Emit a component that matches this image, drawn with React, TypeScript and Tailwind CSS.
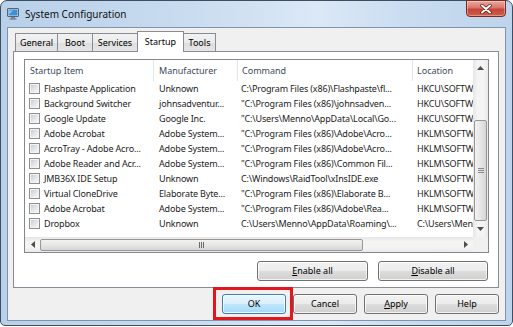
import React from 'react';

type Row = [string, string, string, string];

const rows: Row[] = [
  ['Flashpaste Application', 'Unknown', 'C:\\Program Files (x86)\\Flashpaste\\fl...', 'HKCU\\SOFTWARE\\Microsoft\\Windows\\Run'],
  ['Background Switcher', 'johnsadventur...', '"C:\\Program Files (x86)\\johnsadven...', 'HKCU\\SOFTWARE\\Microsoft\\Windows\\Run'],
  ['Google Update', 'Google Inc.', '"C:\\Users\\Menno\\AppData\\Local\\Go...', 'HKCU\\SOFTWARE\\Microsoft\\Windows\\Run'],
  ['Adobe Acrobat', 'Adobe System...', '"C:\\Program Files (x86)\\Adobe\\Acro...', 'HKLM\\SOFTWARE\\Microsoft\\Windows\\Run'],
  ['AcroTray - Adobe Acro...', 'Adobe System...', '"C:\\Program Files (x86)\\Adobe\\Acro...', 'HKLM\\SOFTWARE\\Microsoft\\Windows\\Run'],
  ['Adobe Reader and Acr...', 'Adobe System...', '"C:\\Program Files (x86)\\Common Fil...', 'HKLM\\SOFTWARE\\Microsoft\\Windows\\Run'],
  ['JMB36X IDE Setup', 'Unknown', 'C:\\Windows\\RaidTool\\xInsIDE.exe', 'HKLM\\SOFTWARE\\Microsoft\\Windows\\Run'],
  ['Virtual CloneDrive', 'Elaborate Byte...', '"C:\\Program Files (x86)\\Elaborate B...', 'HKLM\\SOFTWARE\\Microsoft\\Windows\\Run'],
  ['Adobe Acrobat', 'Adobe System...', '"C:\\Program Files (x86)\\Adobe\\Rea...', 'HKLM\\SOFTWARE\\Microsoft\\Windows\\Run'],
  ['Dropbox', 'Unknown', 'C:\\Users\\Menno\\AppData\\Roaming\\...', 'C:\\Users\\Menno\\AppData\\Roaming'],
];

const tabs = ['General', 'Boot', 'Services', 'Startup', 'Tools'];
const tabWidths = ['w-[43px]', 'w-[36px]', 'w-[46px]', 'w-[47px]', 'w-[33px]'];

const Button: React.FC<{ width: string; isDefault?: boolean; children: React.ReactNode }> = ({
  width,
  isDefault,
  children,
}) => (
  <div
    className={`${width} h-[20px] flex items-center justify-center rounded-[3px] border text-[9px] text-black shadow-[inset_0_0_0_1px_rgba(255,255,255,0.75)] ${
      isDefault
        ? 'border-[#3c7fb1] bg-[linear-gradient(#eaf6fd_0%,#d9f0fc_50%,#bee6fd_51%,#a7d9f5_100%)]'
        : 'border-[#707070] bg-[linear-gradient(#f2f2f2_0%,#ebebeb_50%,#dddddd_51%,#cfcfcf_100%)]'
    }`}
  >
    {children}
  </div>
);

const Arrow: React.FC<{ dir: 'up' | 'down' | 'left' | 'right' }> = ({ dir }) => {
  const pts = {
    up: '0,4 3.5,0 7,4',
    down: '0,0 3.5,4 7,0',
    left: '4,0 0,3.5 4,7',
    right: '0,0 4,3.5 0,7',
  }[dir];
  const vertical = dir === 'up' || dir === 'down';
  return (
    <svg width={vertical ? 7 : 4} height={vertical ? 4 : 7} viewBox={vertical ? '0 0 7 4' : '0 0 4 7'}>
      <polygon points={pts} fill="#4d4d4d" />
    </svg>
  );
};

const CheckBox: React.FC = () => (
  <div className="w-[11px] h-[11px] shrink-0 border border-[#8e8f8f] bg-[#f4f4f4] p-px">
    <div className="w-full h-full bg-[linear-gradient(135deg,#c9ccd1_0%,#e3e4e6_50%,#f7f7f7_100%)]" />
  </div>
);

const AppIcon: React.FC = () => (
  <svg width="12" height="12" viewBox="0 0 12 12">
    <rect x="0.5" y="0.5" width="11" height="8" rx="0.5" fill="#d9dee4" stroke="#5a6470" />
    <rect x="1.5" y="1.5" width="9" height="6" fill="#3f8ed8" />
    <path d="M2 2.5h4l-4 4z" fill="#8cc4f2" />
    <rect x="4" y="9" width="4" height="1.5" fill="#7b8591" />
    <rect x="2.5" y="10.5" width="7" height="1" fill="#5a6470" />
  </svg>
);

const StartupList: React.FC = () => (
  <div className="ml-[10px] mt-[7px] w-[465px] h-[194px] border border-[#828790] bg-white flex flex-col">
    <div className="flex h-[177px]">
      <div className="w-[448px] overflow-hidden">
        {/* header */}
        <div className="flex h-[21px] items-center text-[9px] text-[#3c4a5c] whitespace-nowrap">
          <div className="w-[129px] h-full flex items-center pl-[5px] border-r border-[#e3e6ea]">Startup Item</div>
          <div className="w-[84px] h-full flex items-center pl-[5px] border-r border-[#e3e6ea]">Manufacturer</div>
          <div className="w-[175px] h-full flex items-center pl-[4px] border-r border-[#e3e6ea]">Command</div>
          <div className="w-[60px] h-full flex items-center pl-[4px] overflow-hidden">Location</div>
        </div>
        {rows.map((r, i) => (
          <div
            key={i}
            className="flex h-[15px] items-center text-[9px] tracking-[-0.15px] text-[#1c1c1c] whitespace-nowrap"
          >
            <div className="w-[129px] flex items-center gap-[4px] pl-[4px] overflow-hidden">
              <CheckBox />
              <span>{r[0]}</span>
            </div>
            <div className="w-[84px] pl-[5px] overflow-hidden">{r[1]}</div>
            <div className="w-[175px] pl-[3px] overflow-hidden">{r[2]}</div>
            <div className="w-[60px] pl-[4px] overflow-hidden">{r[3]}</div>
          </div>
        ))}
      </div>
      {/* vertical scrollbar */}
      <div className="w-[15px] flex flex-col bg-[linear-gradient(90deg,#e6e6e6_0%,#f4f4f4_30%,#f4f4f4_70%,#e9e9e9_100%)]">
        <div className="h-[15px] flex items-center justify-center">
          <Arrow dir="up" />
        </div>
        <div className="flex-1 px-px">
          <div className="mt-[45px] h-[101px] rounded-[2px] border border-[#979797] bg-[linear-gradient(90deg,#f2f2f2_0%,#e6e6e6_50%,#d6d6d6_100%)] flex flex-col items-center justify-center gap-px">
            <div className="w-[6px] h-px bg-[#8a8a8a]" />
            <div className="w-[6px] h-px bg-[#8a8a8a]" />
            <div className="w-[6px] h-px bg-[#8a8a8a]" />
          </div>
        </div>
        <div className="h-[16px] flex items-center justify-center">
          <Arrow dir="down" />
        </div>
      </div>
    </div>
    {/* horizontal scrollbar */}
    <div className="flex h-[15px]">
      <div className="w-[448px] flex items-center bg-[linear-gradient(#e6e6e6_0%,#f4f4f4_30%,#f4f4f4_70%,#e9e9e9_100%)]">
        <div className="w-[15px] h-full flex items-center justify-center">
          <Arrow dir="left" />
        </div>
        <div className="w-[323px] h-[12px] rounded-[2px] border border-[#979797] bg-[linear-gradient(#f2f2f2_0%,#e6e6e6_50%,#d6d6d6_100%)] flex items-center justify-center gap-px">
          <div className="w-px h-[6px] bg-[#6a6a6a]" />
          <div className="w-px h-[6px] bg-[#6a6a6a]" />
          <div className="w-px h-[6px] bg-[#6a6a6a]" />
        </div>
        <div className="flex-1" />
        <div className="w-[15px] h-full flex items-center justify-center">
          <Arrow dir="right" />
        </div>
      </div>
      <div className="w-[15px] bg-[#f0f0f0]" />
    </div>
  </div>
);

const App: React.FC = () => {
  return (
    <div className="w-[513px] h-[327px] bg-white overflow-hidden font-['Noto_Sans',sans-serif]">
      <div className="w-[513px] h-[326px] flex flex-col border border-[#3d4e62] rounded-t-[7px] rounded-b-[5px] bg-[linear-gradient(90deg,#b8d0e9_0%,#c8dbef_35%,#dbe8f6_62%,#c9dcf0_80%,#bdd4ec_100%)]">
        {/* title bar */}
        <div className="h-[26px] flex items-start shrink-0">
          <div className="h-full flex items-center pl-[6px] gap-[6px]">
            <AppIcon />
            <span className="text-[10px] text-[#111]">System Configuration</span>
          </div>
          <div className="ml-auto mr-[6px] w-[40px] h-[17px] -mt-px flex items-center justify-center rounded-b-[4px] border border-[#7a2a22] bg-[linear-gradient(#e9a99b_0%,#d8766a_45%,#c4453a_55%,#d25c48_100%)] shadow-[inset_0_0_0_1px_rgba(255,255,255,0.35)]">
            <svg width="12" height="10" viewBox="0 0 12 10">
              <path d="M2 1.5 10 8.5M10 1.5 2 8.5" stroke="#5a1a14" strokeWidth="3.4" strokeLinecap="round" />
              <path d="M2 1.5 10 8.5M10 1.5 2 8.5" stroke="#ffffff" strokeWidth="2" strokeLinecap="round" />
            </svg>
          </div>
        </div>

        {/* client area */}
        <div className="flex-1 mx-[6px] mb-[4px] border border-[#7f93a9] bg-[#f0f0f0] flex flex-col pt-[3px]">
          <div className="flex items-end h-[20px] pl-[7px]">
            {tabs.map((t, i) =>
              t === 'Startup' ? (
                <div
                  key={t}
                  className={`${tabWidths[i]} -ml-px h-[21px] -mb-px relative z-10 flex items-center justify-center border border-b-0 border-[#898c95] bg-white text-[9px] text-black`}
                >
                  {t}
                </div>
              ) : (
                <div
                  key={t}
                  className={`${tabWidths[i]} ${i === 0 ? '' : '-ml-px'} h-[18px] flex items-center justify-center border border-b-0 border-[#898c95] bg-[linear-gradient(#f2f2f2_0%,#ebebeb_50%,#dddddd_51%,#e6e6e6_100%)] text-[9px] text-black`}
                >
                  {t}
                </div>
              )
            )}
          </div>

          {/* tab panel */}
          <div className="ml-[5px] w-[486px] h-[237px] border border-[#898c95] bg-white flex flex-col">
            <StartupList />
            <div className="mt-[8px] flex justify-end gap-[10px] pr-[10px]">
              <Button width="w-[111px]">
                <span className="underline">E</span>nable all
              </Button>
              <Button width="w-[110px]">
                <span className="underline">D</span>isable all
              </Button>
            </div>
          </div>

          <div className="mt-[6px] flex justify-end gap-[7px] pr-[6px]">
            <div className="relative">
              <Button width="w-[64px]" isDefault>
                OK
              </Button>
              {/* highlight annotation */}
              <div className="absolute -left-[9px] -right-[7px] -top-[7px] -bottom-[6px] border-[3px] border-[#e3161c]" />
            </div>
            <Button width="w-[64px]">Cancel</Button>
            <Button width="w-[64px]">
              <span className="underline">A</span>pply
            </Button>
            <Button width="w-[64px]">Help</Button>
          </div>
        </div>
      </div>
    </div>
  );
};

export default App;
